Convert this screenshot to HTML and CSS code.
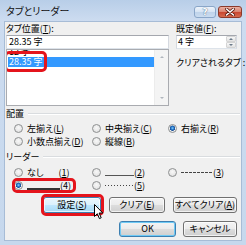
FILE: index.html
```html
<!DOCTYPE html>
<html lang="ja">
<head>
    <meta charset="UTF-8">
    <title>タブとリーダー</title>
    <link rel="stylesheet" href="styles.css">
</head>
<body>
    <div class="window">
        <div class="titlebar">
            <span class="title">タブとリーダー</span>
            <div class="caption-btns">
                <span class="cap help">?</span>
                <span class="cap close">
                    <svg width="10" height="8" viewBox="0 0 10 8"><path d="M1.5 1 L8.5 7 M8.5 1 L1.5 7" stroke="#5a1a10" stroke-width="3" stroke-linecap="round"/><path d="M1.5 1 L8.5 7 M8.5 1 L1.5 7" stroke="#fff" stroke-width="1.6" stroke-linecap="round"/></svg>
                </span>
            </div>
        </div>

        <div class="client">
            <div class="top">
                <div class="col-left">
                    <div class="label">タブ位置(<u>T</u>):</div>
                    <div class="textbox">28.35 字</div>
                    <div class="listbox">
                        <div class="items">
                            <div class="item cut">12 字</div>
                            <div class="item selected"><span class="mark">28.35 字</span></div>
                        </div>
                        <div class="scrollbar">
                            <span class="arrow up"></span>
                            <span class="arrow down"></span>
                        </div>
                    </div>
                </div>
                <div class="col-right">
                    <div class="label">既定値(<u>F</u>):</div>
                    <div class="textbox spin">
                        <span>4 字</span>
                        <span class="spinner">
                            <span class="spin-btn"><span class="arrow up"></span></span>
                            <span class="spin-btn"><span class="arrow down"></span></span>
                        </span>
                    </div>
                    <div class="label clear-label">クリアされるタブ :</div>
                </div>
            </div>

            <div class="group-title">配置</div>
            <div class="options">
                <div class="opt"><span class="radio"></span>左揃え(<u>L</u>)</div>
                <div class="opt"><span class="radio"></span>中央揃え(<u>C</u>)</div>
                <div class="opt"><span class="radio checked"></span>右揃え(<u>R</u>)</div>
                <div class="opt"><span class="radio"></span>小数点揃え(<u>D</u>)</div>
                <div class="opt"><span class="radio"></span>縦線(<u>B</u>)</div>
            </div>

            <div class="group-title leader-title">リーダー</div>
            <div class="options leaders">
                <div class="opt"><span class="radio"></span>なし<span class="num gap">(<u>1</u>)</span></div>
                <div class="opt"><span class="radio"></span><span class="line thin"></span><span class="num">(<u>2</u>)</span></div>
                <div class="opt"><span class="radio"></span><span class="line dashed"></span><span class="num">(<u>3</u>)</span></div>
                <div class="opt boxed"><span class="radio checked"></span><span class="line thick"></span><span class="num">(<u>4</u>)</span></div>
                <div class="opt"><span class="radio"></span><span class="line dotted"></span><span class="num">(<u>5</u>)</span></div>
            </div>

            <div class="buttons">
                <div class="btn hot boxed-btn">設定(<u>S</u>)
                    <svg class="cursor" width="10" height="16" viewBox="0 0 10 16"><path d="M0.5 0.5 L0.5 12.5 L3.3 9.7 L5.4 14.6 L7.2 13.8 L5.1 9 L8.8 9 Z" fill="#fff" stroke="#000" stroke-width="1" stroke-linejoin="round"/></svg>
                </div>
                <div class="btn w56">クリア(<u>E</u>)</div>
                <div class="btn w64">すべてクリア(<u>A</u>)</div>
            </div>
            <div class="buttons bottom-row">
                <div class="btn default">OK</div>
                <div class="btn w54">キャンセル</div>
            </div>
        </div>
    </div>
</body>
</html>
```

FILE: styles.css
```css
body {
    margin: 0;
    font-family: "Noto Sans CJK JP", sans-serif;
    font-size: 9px;
    font-feature-settings: "palt";
    color: #000;
}
u {
    text-decoration-thickness: 1px;
    text-underline-offset: 1px;
}
.window {
    width: 246px;
    height: 245px;
    box-sizing: border-box;
    padding: 0 4px 4px 4px;
    display: flex;
    flex-direction: column;
    background: linear-gradient(180deg, #b8cee8 0, #cddcf0 21px, #c6d8ed 100%);
}
.titlebar {
    height: 21px;
    flex: none;
    display: flex;
    justify-content: space-between;
    align-items: center;
}
.title {
    padding-left: 2px;
    font-size: 10px;
    color: #111;
}
.caption-btns {
    align-self: flex-start;
    margin-top: 6px;
    display: flex;
    gap: 2px;
}
.cap {
    height: 12px;
    box-sizing: border-box;
    border-radius: 3px;
    display: flex;
    align-items: center;
    justify-content: center;
}
.help {
    width: 22px;
    border: 1px solid #8aa6c8;
    background: linear-gradient(180deg, #eef4fb 0, #d5e3f3 50%, #bfd3ea 51%, #cadcf0 100%);
    color: #fff;
    font-family: "DejaVu Sans", sans-serif;
    font-size: 9px;
    font-weight: bold;
    text-shadow: 0 0 1px #53708f, 0 0 1px #53708f;
}
.close {
    width: 24px;
    border: 1px solid #8b3a2b;
    background: linear-gradient(180deg, #eab0a2 0, #d9806c 50%, #c8452f 51%, #d66a4e 100%);
}
.client {
    flex: 1;
    background: #f0f0f0;
    border: 1px solid #a7bcd6;
    position: relative;
}
.top {
    display: grid;
    grid-template-columns: 163px 61px;
    column-gap: 7px;
    margin-left: 1px;
}
.label {
    line-height: 12px;
    padding-top: 1px;
    white-space: nowrap;
}
.textbox {
    height: 14px;
    box-sizing: border-box;
    background: #fff;
    border: 1px solid;
    border-color: #a4a7ae #d5d9e0 #dde3ea #d5d9e0;
    padding-left: 2px;
    line-height: 12px;
}
.spin {
    display: flex;
    justify-content: space-between;
    padding-left: 1px;
}
.spinner {
    width: 10px;
    display: flex;
    flex-direction: column;
}
.spin-btn {
    flex: 1;
    display: flex;
    align-items: center;
    justify-content: center;
    background: linear-gradient(180deg, #f7f7f7, #e2e2e2);
    border: 1px solid #d4d4d4;
    border-radius: 1px;
}
.arrow {
    width: 0;
    height: 0;
    border-left: 2px solid transparent;
    border-right: 2px solid transparent;
}
.arrow.up {
    border-bottom: 2px solid #6b7a8a;
}
.arrow.down {
    border-top: 2px solid #6b7a8a;
}
.clear-label {
    margin-top: 7px;
}
.listbox {
    height: 57px;
    box-sizing: border-box;
    border: 1px solid #a9abb0;
    background: #fff;
    display: flex;
}
.items {
    flex: 1;
    overflow: hidden;
}
.item {
    height: 10px;
    line-height: 10px;
    padding-left: 2px;
}
.item.cut {
    margin-top: -3px;
}
.item.selected {
    background: #3399ff;
    color: #fff;
    margin-left: 1px;
    padding-left: 1px;
}
.mark {
    position: relative;
}
.mark::after {
    content: "";
    position: absolute;
    top: -4px;
    bottom: -4px;
    left: -5px;
    right: -4px;
    border: 3px solid #e4141c;
    border-radius: 5px;
}
.scrollbar {
    width: 13px;
    background: #f4f4f4;
    border-left: 1px solid #ececec;
    display: flex;
    flex-direction: column;
    align-items: center;
    justify-content: space-between;
    padding: 6px 0 6px;
}
.scrollbar .arrow.up {
    border-bottom-color: #b0b6bd;
}
.scrollbar .arrow.down {
    border-top-color: #b0b6bd;
}
.group-title {
    margin: 2px 1px 0 1px;
    height: 11px;
    line-height: 11px;
    display: flex;
    align-items: center;
    gap: 4px;
}
.group-title::after {
    content: "";
    flex: 1;
    height: 1px;
    background: #d9dcdf;
    border-bottom: 1px solid #fff;
}
.leader-title {
    margin-top: 3px;
}
.options {
    margin-top: 3px;
    padding-left: 9px;
    display: grid;
    grid-template-columns: 78px 76px 1fr;
    grid-auto-rows: 13px;
}
.leaders {
    margin-top: 4px;
}
.opt {
    display: flex;
    align-items: center;
    white-space: nowrap;
    position: relative;
}
.radio {
    width: 9px;
    height: 9px;
    box-sizing: border-box;
    border-radius: 50%;
    border: 1px solid #8e9091;
    background: radial-gradient(circle at 50% 40%, #f8f8f8 0, #e8e8e8 60%, #d4d4d4 100%);
    margin-right: 4px;
    flex: none;
}
.radio.checked {
    background: radial-gradient(circle at 50% 45%, #8fd0fa 0, #2a7fd0 1.4px, #184f98 2.4px, #f2f2f2 2.9px, #e0e0e0 100%);
}
.num.gap {
    margin-left: 15px;
}
.line {
    display: inline-block;
    width: 29px;
    flex: none;
}
.line.thin {
    height: 6px;
    border-bottom: 1px solid #555;
}
.line.dashed {
    width: 32px;
    height: 1px;
    background: repeating-linear-gradient(90deg, #444 0 3px, transparent 3px 4px);
}
.line.thick {
    width: 33px;
    height: 6px;
    border-bottom: 2px solid #333;
}
.line.dotted {
    height: 1px;
    background: repeating-linear-gradient(90deg, #444 0 1px, transparent 1px 3px);
}
.boxed::after {
    content: "";
    position: absolute;
    top: -1px;
    bottom: -1px;
    left: -2px;
    right: -4px;
    border: 3px solid #e4141c;
    border-radius: 5px;
}
.boxed {
    width: 58px;
}
.buttons {
    margin: 5px 4px 0 0;
    display: flex;
    justify-content: flex-end;
    gap: 8px;
}
.bottom-row {
    margin-top: 8px;
    gap: 7px;
}
.btn {
    width: 58px;
    height: 16px;
    box-sizing: border-box;
    border: 1px solid #707070;
    border-radius: 3px;
    background: linear-gradient(180deg, #f4f4f4 0, #ebebeb 50%, #dddddd 51%, #cfcfcf 100%);
    box-shadow: inset 0 0 0 1px rgba(255, 255, 255, 0.7);
    display: flex;
    align-items: center;
    justify-content: center;
    line-height: 12px;
    white-space: nowrap;
    position: relative;
}
.w56 {
    width: 56px;
}
.w64 {
    width: 64px;
}
.w54 {
    width: 54px;
}
.btn.hot {
    border-color: #3c7fb1;
    background: linear-gradient(180deg, #eaf6fd 0, #d9f0fc 50%, #bee6fd 51%, #a7d9f5 100%);
}
.btn.default {
    width: 57px;
    border-color: #3c7fb1;
    box-shadow: inset 0 0 0 1px #6fcaf5;
}
.boxed-btn::after {
    content: "";
    position: absolute;
    top: -4px;
    bottom: -4px;
    left: -3px;
    right: -4px;
    border: 3px solid #e4141c;
    border-radius: 5px;
}
.cursor {
    position: absolute;
    left: 50px;
    top: 6px;
    z-index: 2;
}
```
